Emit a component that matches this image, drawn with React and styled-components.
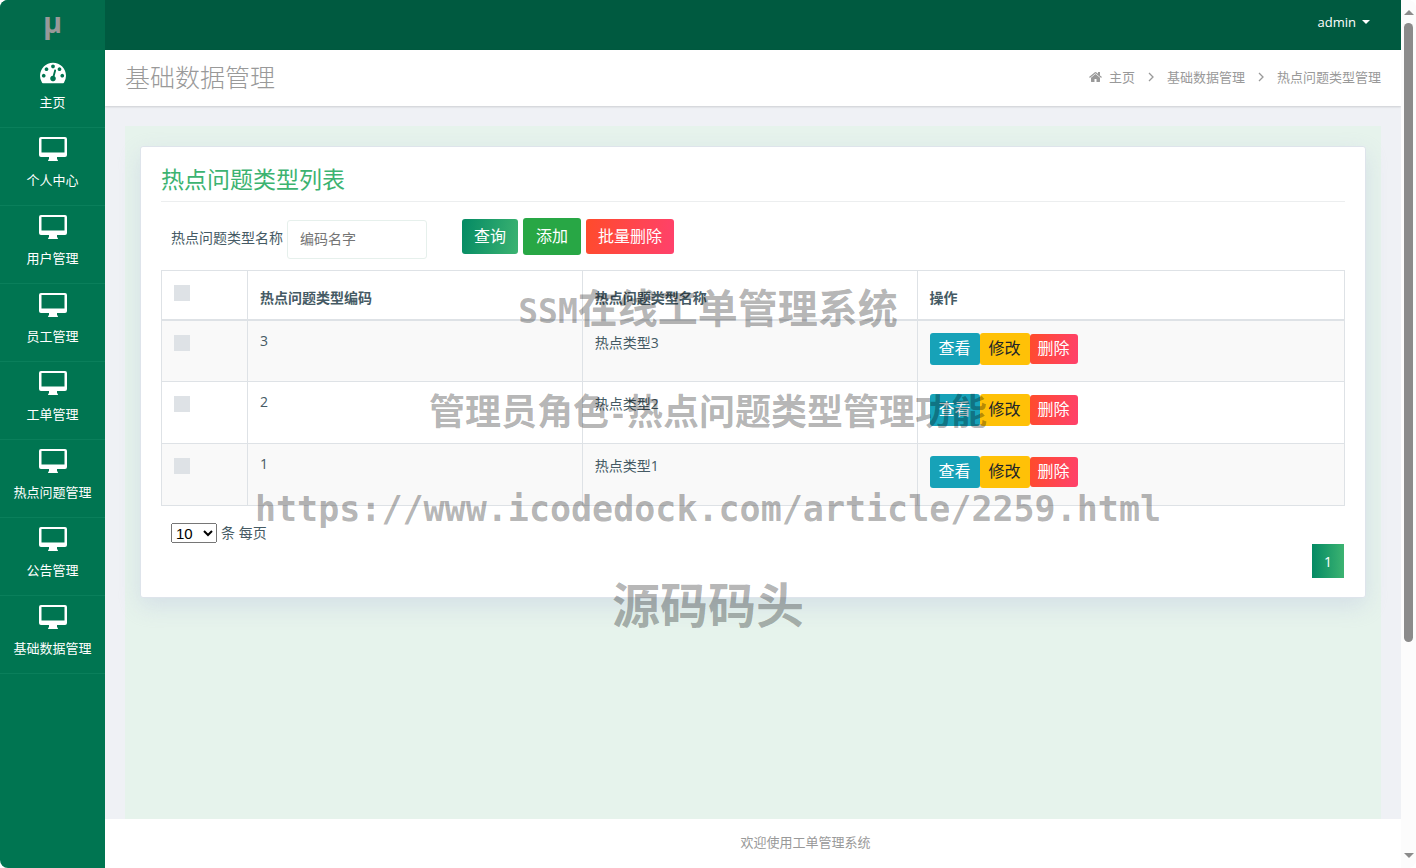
import React, { useState } from 'react'
import styled, { createGlobalStyle } from 'styled-components'

const menu = ['主页', '个人中心', '用户管理', '员工管理', '工单管理', '热点问题管理', '公告管理', '基础数据管理']

const types = [
  { code: 3, name: '热点类型3' },
  { code: 2, name: '热点类型2' },
  { code: 1, name: '热点类型1' },
]

const DashboardIcon = () => (
  <svg width="26" height="26" viewBox="0 0 1792 1792" fill="currentColor" aria-hidden="true">
    <path d="M384 1152q0-53-37.5-90.5t-90.5-37.5-90.5 37.5-37.5 90.5 37.5 90.5 90.5 37.5 90.5-37.5 37.5-90.5zm192-448q0-53-37.5-90.5t-90.5-37.5-90.5 37.5-37.5 90.5 37.5 90.5 90.5 37.5 90.5-37.5 37.5-90.5zm428 481l101-382q6-26-7.5-48.5t-38.5-29.5-48 6.5-30 39.5l-101 382q-60 5-107 43.5t-63 98.5q-20 77 20 146t117 89 146-20 89-117q16-60-6-117t-72-91zm660-33q0-53-37.5-90.5t-90.5-37.5-90.5 37.5-37.5 90.5 37.5 90.5 90.5 37.5 90.5-37.5 37.5-90.5zm-640-640q0-53-37.5-90.5t-90.5-37.5-90.5 37.5-37.5 90.5 37.5 90.5 90.5 37.5 90.5-37.5 37.5-90.5zm448 192q0-53-37.5-90.5t-90.5-37.5-90.5 37.5-37.5 90.5 37.5 90.5 90.5 37.5 90.5-37.5 37.5-90.5zm320 448q0 261-141 483-19 29-54 29h-1402q-35 0-54-29-141-221-141-483 0-182 71-348t191-286 286-191 348-71 348 71 286 191 191 286 71 348z" />
  </svg>
)

const MonitorIcon = () => (
  <svg width="28" height="26" viewBox="0 0 28 26" fill="currentColor" aria-hidden="true">
    <path fillRule="evenodd" d="M2 0h24q2 0 2 2v16q0 2-2 2h-8v2q1 1 1 2h-10q0-1 1-2v-2H2q-2 0-2-2V2q0-2 2-2zM2.500 2v13.500h23V2z" />
  </svg>
)

const HomeIcon = () => (
  <svg width="14" height="14" viewBox="0 0 1792 1792" fill="currentColor" aria-hidden="true">
    <path d="M1408 992v480q0 26-19 45t-45 19h-384v-384h-256v384h-384q-26 0-45-19t-19-45v-480q0-1 .5-3t.5-3l575-474 575 474q1 2 1 6zm223-69l-62 74q-8 9-21 11h-3q-13 0-21-7l-692-577-692 577q-12 8-24 7-13-2-21-11l-62-74q-8-10-7-23.5t11-21.5l719-599q32-26 76-26t76 26l244 204v-195q0-14 9-23t23-9h192q14 0 23 9t9 23v408l219 182q10 8 11 21.5t-7 23.5z" />
  </svg>
)

const Angle = () => (
  <svg width="6" height="10" viewBox="0 0 6 10" fill="none" stroke="currentColor" strokeWidth="1.3" aria-hidden="true">
    <path d="M1 1l4 4-4 4" />
  </svg>
)

export default function App() {
  const [keyword, setKeyword] = useState('')
  const [checked, setChecked] = useState([])

  const toggle = (code) => {
    setChecked((prev) => (prev.includes(code) ? prev.filter((c) => c !== code) : [...prev, code]))
  }

  const toggleAll = () => {
    setChecked((prev) => (prev.length === types.length ? [] : types.map((t) => t.code)))
  }

  return (
    <Page>
      <GlobalStyle />
      <Sidebar>
        <Logo href="#">μ</Logo>
        <Menu>
          {menu.map((label, i) => (
            <li key={label}>
              <MenuLink href="#">
                {i === 0 ? <DashboardIcon /> : <MonitorIcon />}
                {label}
              </MenuLink>
            </li>
          ))}
        </Menu>
      </Sidebar>

      <Main>
        <TopBar>
          <UserButton type="button">
            admin
            <Caret />
          </UserButton>
        </TopBar>
        <TitleBar>
          <PageTitle>基础数据管理</PageTitle>
          <Breadcrumb aria-label="breadcrumb">
            <Crumb href="#"><HomeIcon />主页</Crumb>
            <Angle />
            <Crumb href="#">基础数据管理</Crumb>
            <Angle />
            <span>热点问题类型管理</span>
          </Breadcrumb>
        </TitleBar>

        <Content>
          <Panel>
            <Card>
              <CardTitle>热点问题类型列表</CardTitle>
              <Filters onSubmit={(e) => e.preventDefault()}>
                <label htmlFor="typeName">热点问题类型名称</label>
                <SearchInput
                  id="typeName"
                  placeholder="编码名字"
                  value={keyword}
                  onChange={(e) => setKeyword(e.target.value)}
                />
                <Actions>
                  <Button $kind="primary">查询</Button>
                  <Button type="button" $kind="success">添加</Button>
                  <Button type="button" $kind="danger">批量删除</Button>
                </Actions>
              </Filters>

              <Table>
                <colgroup>
                  <CheckCol />
                  <CodeCol />
                  <CodeCol />
                  <col />
                </colgroup>
                <thead>
                  <tr>
                    <th>
                      <Checkbox
                        type="checkbox"
                        aria-label="全选"
                        checked={checked.length === types.length}
                        onChange={toggleAll}
                      />
                    </th>
                    <th>热点问题类型编码</th>
                    <th>热点问题类型名称</th>
                    <th>操作</th>
                  </tr>
                </thead>
                <tbody>
                  {types.map((type) => (
                    <tr key={type.code}>
                      <td>
                        <Checkbox
                          type="checkbox"
                          aria-label={type.name}
                          checked={checked.includes(type.code)}
                          onChange={() => toggle(type.code)}
                        />
                      </td>
                      <td>{type.code}</td>
                      <td>{type.name}</td>
                      <td>
                        <RowActions>
                          <Button type="button" $small $kind="info">查看</Button>
                          <Button type="button" $small $kind="warning">修改</Button>
                          <Button type="button" $small $kind="danger">删除</Button>
                        </RowActions>
                      </td>
                    </tr>
                  ))}
                </tbody>
              </Table>

              <PageSize>
                <select id="pageSize" defaultValue="10">
                  <option>10</option>
                  <option>25</option>
                  <option>50</option>
                </select>
                <label htmlFor="pageSize">条 每页</label>
              </PageSize>
              <Pagination>
                <PageButton type="button">1</PageButton>
              </Pagination>
            </Card>
          </Panel>
        </Content>
        <Footer>欢迎使用工单管理系统</Footer>
      </Main>

      <ScrollTrack aria-hidden="true">
        <ScrollArrow />
        <ScrollThumb />
        <ScrollArrow $down />
      </ScrollTrack>

      <Watermark>
        <Mark $size={40} $line={100}><Latin $size={33}>SSM</Latin>在线工单管理系统</Mark>
        <Mark $size={36} $line={106}>管理员角色<Latin $size={30}>-</Latin>热点问题类型管理功能</Mark>
        <Mark $size={35} $line={88}><Latin $size={35}>https://www.icodedock.com/article/2259.html</Latin></Mark>
        <Mark $size={48} $line={104}>源码码头</Mark>
      </Watermark>
    </Page>
  )
}

const GlobalStyle = createGlobalStyle`
  * {
    box-sizing: border-box;
  }
  body {
    margin: 0;
    background: #fff;
    color: #455a64;
    font-family: 'Open Sans', 'Noto Sans CJK SC', sans-serif;
    font-size: 14px;
    line-height: 20px;
  }
  button, input {
    font-family: inherit;
  }
  a {
    color: inherit;
    text-decoration: none;
  }
`

const Page = styled.div`
  position: relative;
  display: grid;
  grid-template-columns: 105px 1fr 15px;
  min-height: 100vh;
  border-radius: 8px;
  overflow: hidden;
`

const Sidebar = styled.aside`
  background: #007551;
  color: #fff;
`

const Logo = styled.a`
  display: flex;
  align-items: center;
  justify-content: center;
  height: 50px;
  padding-bottom: 6px;
  background: #026b4b;
  color: #999;
  font-size: 29px;
  font-weight: 700;
`

const Menu = styled.ul`
  margin: 0;
  padding: 0;
  list-style: none;
`

const MenuLink = styled.a`
  display: flex;
  flex-direction: column;
  align-items: center;
  gap: 7px;
  height: 78px;
  padding-top: 9px;
  border-bottom: 1px solid #0a7f5b;
  font-size: 13px;
  line-height: 20px;
`

const Main = styled.main`
  display: flex;
  flex-direction: column;
  min-width: 0;
  background: #eff1f5;
`

const TopBar = styled.header`
  display: flex;
  align-items: center;
  justify-content: flex-end;
  height: 50px;
  padding: 0 31px 6px;
  background: #005a40;
`

const UserButton = styled.button`
  display: flex;
  align-items: center;
  gap: 6px;
  padding: 0;
  border: 0;
  background: none;
  color: #fff;
  font-size: 13px;
  font-weight: 500;
`

const Caret = styled.span`
  border: 4px solid transparent;
  border-top-color: #fff;
  border-bottom: 0;
`

const TitleBar = styled.div`
  display: flex;
  align-items: center;
  justify-content: space-between;
  height: 56px;
  padding: 0 20px 2px;
  background: #fff;
  color: #999;
  box-shadow: 0 1px 2px rgba(0, 0, 0, 0.15);
`

const PageTitle = styled.h1`
  margin: 0;
  font-size: 25px;
  font-weight: 300;
  line-height: 36px;
`

const Breadcrumb = styled.nav`
  display: flex;
  align-items: center;
  gap: 13px;
  font-size: 13px;
`

const Crumb = styled.a`
  display: flex;
  align-items: center;
  gap: 6px;
`

const Content = styled.div`
  display: flex;
  flex: 1;
  padding: 20px 20px 0;
`

const Panel = styled.div`
  flex: 1;
  padding: 20px 15px;
  background: #e6f3ec;
`

const Card = styled.section`
  padding: 16px 20px 19px;
  border: 1px solid #dee4eb;
  border-radius: 3px;
  background: #fff;
  box-shadow: 0 8px 22px rgba(190, 200, 225, 0.45);
`

const CardTitle = styled.h2`
  margin: 0 0 16px;
  padding-bottom: 5px;
  border-bottom: 1px solid #eceeef;
  color: #3cb371;
  font-size: 23px;
  font-weight: 400;
  line-height: 33px;
`

const Filters = styled.form`
  display: flex;
  align-items: center;
  gap: 4px;
  padding-left: 10px;
  margin-bottom: 10px;
  label {
    padding-bottom: 2px;
  }
`

const SearchInput = styled.input`
  width: 140px;
  height: 39px;
  padding: 0 12px 1px;
  border: 1px solid #e6f0ec;
  border-radius: 3px;
  font-size: 14px;
  &::placeholder {
    color: #757575;
  }
`

const Actions = styled.div`
  display: flex;
  align-items: center;
  gap: 5px;
  padding: 0 0 5px 31px;
`

const fills = {
  primary: 'linear-gradient(100deg, #048a64, #3cb371)',
  success: '#28a745',
  danger: 'linear-gradient(100deg, #ff4b2b, #ff416c)',
  info: '#17a2b8',
  warning: '#ffc107',
}

const flat = (kind) => kind === 'success' || kind === 'info' || kind === 'warning'

const Button = styled.button`
  height: ${(props) => (props.$small ? 30 : 35) + (flat(props.$kind) ? 2 : 0)}px;
  padding: 0 ${(props) => (props.$small ? 8 : 12) + (flat(props.$kind) ? 1 : 0)}px 2px;
  border: 0;
  border-radius: 3px;
  background: ${(props) => fills[props.$kind]};
  color: ${(props) => (props.$kind === 'warning' ? '#212529' : '#fff')};
  font-size: 16px;
  line-height: 24px;
  cursor: pointer;
`

const Table = styled.table`
  width: 100%;
  table-layout: fixed;
  border-collapse: collapse;
  th, td {
    padding: 12px;
    border: 1px solid #dee2e6;
    text-align: left;
    vertical-align: top;
  }
  th {
    height: 49px;
    padding: 17px 12px 10px;
    border-bottom-width: 2px;
    font-weight: 700;
  }
  th:first-child {
    padding-top: 14px;
  }
  td {
    height: 62px;
  }
  td:first-child {
    padding-top: 14px;
  }
  td:nth-child(2) {
    padding-top: 10px;
  }
  tbody tr:nth-child(odd) {
    background: #f9f9f9;
  }
`

const CheckCol = styled.col`
  width: 86px;
`

const CodeCol = styled.col`
  width: 28.3%;
`

const Checkbox = styled.input`
  display: block;
  width: 16px;
  height: 16px;
  margin: 0;
  appearance: none;
  background: #dee2e6;
  &:checked {
    background: #3cb371;
  }
`

const RowActions = styled.div`
  display: flex;
  align-items: center;
`

const PageSize = styled.div`
  display: flex;
  align-items: center;
  gap: 4px;
  padding: 17px 10px 0;
  select {
    width: 46px;
    height: 20px;
    padding: 0;
    font-family: 'Liberation Sans', sans-serif;
    font-size: 15px;
  }
`

const Pagination = styled.div`
  display: flex;
  justify-content: flex-end;
  padding: 1px 1px 0;
`

const PageButton = styled.button`
  width: 32px;
  height: 34px;
  padding: 0;
  border: 0;
  background: linear-gradient(90deg, #048a64, #3cb371);
  color: #fff;
  font-size: 14px;
`

const Footer = styled.footer`
  padding: 13px 0 16px 105px;
  background: #fff;
  color: #999;
  font-size: 13px;
  text-align: center;
`

const ScrollTrack = styled.div`
  display: flex;
  flex-direction: column;
  align-items: center;
  padding: 10px 0;
  background: #fcfcfc;
`

const ScrollArrow = styled.span`
  border: 5px solid transparent;
  border-${(props) => (props.$down ? 'top' : 'bottom')}-color: #8b8b8b;
  border-${(props) => (props.$down ? 'bottom' : 'top')}: 0;
  margin-top: ${(props) => (props.$down ? 'auto' : '0')};
`

const ScrollThumb = styled.span`
  width: 9px;
  height: 73%;
  margin-top: 8px;
  border-radius: 5px;
  background: #8b8b8b;
`

const Watermark = styled.div`
  position: absolute;
  inset: 0;
  padding-top: 256px;
  color: rgba(0, 0, 0, 0.3);
  font-weight: 700;
  text-align: center;
  white-space: nowrap;
  pointer-events: none;
`

const Mark = styled.div`
  height: ${(props) => props.$line}px;
  font-family: 'Noto Sans CJK SC', sans-serif;
  font-size: ${(props) => props.$size}px;
  line-height: ${(props) => props.$line}px;
`

const Latin = styled.span`
  font-family: 'DejaVu Sans Mono', monospace;
  font-size: ${(props) => props.$size}px;
  line-height: 1;
`
